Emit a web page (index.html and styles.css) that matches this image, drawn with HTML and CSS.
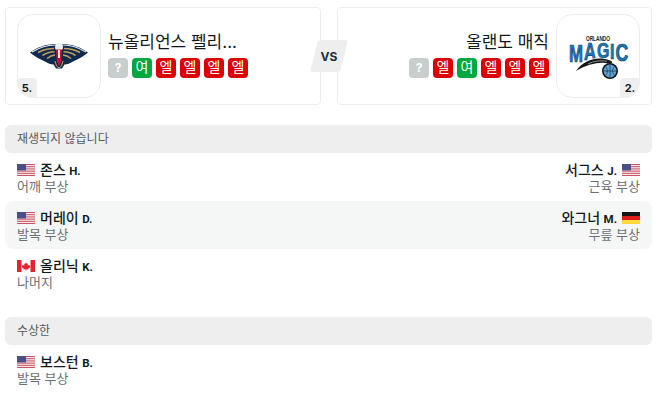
FILE: index.html
```html
<!DOCTYPE html>
<html lang="ko">
<head>
<meta charset="utf-8">
<title>뉴올리언스 펠리컨스 - 올랜도 매직</title>
<link rel="stylesheet" href="styles.css">
</head>
<body>
<svg class="defs" width="0" height="0" aria-hidden="true">
  <defs>
    <symbol id="flag-us" viewBox="0 0 18 12">
      <rect width="18" height="12" fill="#fff"/>
      <g fill="#c8475a">
        <rect y="0" width="18" height="0.92"/><rect y="1.85" width="18" height="0.92"/><rect y="3.69" width="18" height="0.92"/><rect y="5.54" width="18" height="0.92"/><rect y="7.38" width="18" height="0.92"/><rect y="9.23" width="18" height="0.92"/><rect y="11.08" width="18" height="0.92"/>
      </g>
      <rect width="9" height="6.46" fill="#4a4f85"/>
    </symbol>
    <symbol id="flag-de" viewBox="0 0 18 12">
      <rect width="18" height="4" fill="#161616"/>
      <rect y="4" width="18" height="4" fill="#dd1c1c"/>
      <rect y="8" width="18" height="4" fill="#ffd83a"/>
    </symbol>
    <symbol id="flag-ca" viewBox="0 0 18 12">
      <rect width="18" height="12" fill="#fff"/>
      <rect width="4.5" height="12" fill="#e8222c"/>
      <rect x="13.5" width="4.5" height="12" fill="#e8222c"/>
      <path d="M9 2.2l1 1.8.9-.5-.3 2.2 1.2-.9.4.8 1.1-.2-.4 1.3.5.3-2.2 1.7.2.8-2-.3v1.4h-.8V9.2l-2 .3.2-.8-2.2-1.7.5-.3-.4-1.3 1.1.2.4-.8 1.2.9-.3-2.2.9.5z" fill="#e8222c"/>
    </symbol>
  </defs>
</svg>

<main class="page">
  <section class="match">
    <article class="team">
      <div class="logo">
        <svg class="logo-art" viewBox="0 0 84 84" role="img" aria-label="뉴올리언스 펠리컨스 로고">
          <path d="M13 38.500C20 33.500 29 30 38 30L42 33L46 30C55 30 64 33.500 71 38.500C67 42 62 45 57 47C53 49.500 50 50.500 47.500 50.500L45 54.500H39L36.500 50.500C34 50.500 31 49.500 27 47C22 45 17 42 13 38.500Z" fill="#0f2a4e"/>
          <path d="M15 38C22 33.800 30 31 38 31M69 38C62 33.800 54 31 46 31" fill="none" stroke="#e4e7ea" stroke-width="1.100"/>
          <path d="M21 38.500C26 35.800 31 34.500 37 34.500M25.500 41.500C29 39 33 37.800 37.500 37.800M30 44.500C32.500 42.500 35 41.200 38 41M63 38.500C58 35.800 53 34.500 47 34.500M58.500 41.500C55 39 51 37.800 46.500 37.800M54 44.500C51.500 42.500 49 41.200 46 41" fill="none" stroke="#c09f5e" stroke-width="1.600"/>
          <circle cx="42" cy="33" r="4" fill="#ebedee"/>
          <path d="M39 35.500H45L44.300 47L42 52.500L39.700 47Z" fill="#c8102e"/>
          <path d="M41 36H43V44H41Z" fill="#efe9da"/>
          <path d="M38 47L39.500 52L42 54L44.500 52L46 47" fill="none" stroke="#c09f5e" stroke-width="1"/>
        </svg>
        <span class="rank rank-left">5.</span>
      </div>
      <div class="team-info">
        <h2 class="team-name">뉴올리언스 펠리...</h2>
        <div class="form">
          <span class="pill unknown">?</span><span class="pill win">여</span><span class="pill loss">엘</span><span class="pill loss">엘</span><span class="pill loss">엘</span><span class="pill loss">엘</span>
        </div>
      </div>
    </article>

    <div class="vs"><span class="vs-text">VS</span></div>

    <article class="team team-away">
      <div class="team-info">
        <h2 class="team-name">올랜도 매직</h2>
        <div class="form">
          <span class="pill unknown">?</span><span class="pill loss">엘</span><span class="pill win">여</span><span class="pill loss">엘</span><span class="pill loss">엘</span><span class="pill loss">엘</span>
        </div>
      </div>
      <div class="logo">
        <svg class="logo-art" viewBox="0 0 84 84" role="img" aria-label="올랜도 매직 로고">
          <text class="magic-top" transform="translate(30 27) scale(.68 1)">ORLANDO</text>
          <g class="magic-word">
            <text transform="translate(13 48) scale(1.05 1.48)">M</text>
            <text transform="translate(28 46) scale(1.05 1.48)">A</text>
            <text transform="translate(41 44) scale(1 1.35)">G</text>
            <text transform="translate(54 45) scale(1 1.39)">I</text>
            <text transform="translate(59.500 47) scale(1.1 1.48)">C</text>
          </g>
          <path d="M20 57C27 47 40 41.500 54 46.500C58 48 56 50 52 49.500C44 47.500 32 50 20 57Z" fill="#fff" stroke="#fff" stroke-width="1.500"/>
          <path d="M20 57C27 47 40 41.500 54 46.500C58 48 56 50 52 49.500C44 47.500 32 50 20 57Z" fill="#15181b"/>
          <path d="M32 50C38 47 44 46.200 51 47.300" fill="none" stroke="#aab1b6" stroke-width="0.800"/>
          <circle cx="54" cy="57" r="8" fill="#15181b"/>
          <circle cx="54" cy="57" r="6.400" fill="#5fa3d6"/>
          <path d="M47.600 57H60.400M54 50.600V63.400M49.500 52.500C52 55 52 59 49.500 61.500M58.500 52.500C56 55 56 59 58.500 61.500" fill="none" stroke="#16324a" stroke-width="0.700"/>
        </svg>
        <span class="rank rank-right">2.</span>
      </div>
    </article>
  </section>

  <section class="group">
    <h3 class="group-title">재생되지 않습니다</h3>
    <div class="row">
      <div class="player">
        <div class="player-name"><svg class="flag"><use href="#flag-us"/></svg><span>존스 <b class="initial">H.</b></span></div>
        <div class="player-note">어깨 부상</div>
      </div>
      <div class="player player-away">
        <div class="player-name"><span>서그스 <b class="initial">J.</b></span><svg class="flag"><use href="#flag-us"/></svg></div>
        <div class="player-note">근육 부상</div>
      </div>
    </div>
    <div class="row row-alt">
      <div class="player">
        <div class="player-name"><svg class="flag"><use href="#flag-us"/></svg><span>머레이 <b class="initial">D.</b></span></div>
        <div class="player-note">발목 부상</div>
      </div>
      <div class="player player-away">
        <div class="player-name"><span>와그너 <b class="initial">M.</b></span><svg class="flag"><use href="#flag-de"/></svg></div>
        <div class="player-note">무릎 부상</div>
      </div>
    </div>
    <div class="row">
      <div class="player">
        <div class="player-name"><svg class="flag"><use href="#flag-ca"/></svg><span>올리닉 <b class="initial">K.</b></span></div>
        <div class="player-note">나머지</div>
      </div>
    </div>
  </section>

  <section class="group">
    <h3 class="group-title">수상한</h3>
    <div class="row">
      <div class="player">
        <div class="player-name"><svg class="flag"><use href="#flag-us"/></svg><span>보스턴 <b class="initial">B.</b></span></div>
        <div class="player-note">발목 부상</div>
      </div>
    </div>
  </section>
</main>
</body>
</html>
```

FILE: styles.css
```css
* {
  box-sizing: border-box;
}

html,
body {
  margin: 0;
  padding: 0;
  background: #fff;
}

body {
  font-family: Inter, "Noto Sans CJK KR", sans-serif;
  color: #14191e;
  overflow: hidden;
}

.defs {
  display: block;
  height: 0;
}

.page {
  padding: 7px 4px 0 5px;
}

.match {
  position: relative;
  display: flex;
  justify-content: space-between;
}

.team {
  display: flex;
  align-items: center;
  gap: 7px;
  width: 316px;
  height: 98px;
  padding: 6px 11px;
  border: 1px solid #eceeee;
  border-radius: 4px;
}

.team-away {
  width: 315px;
  justify-content: flex-end;
}

.logo {
  position: relative;
  flex: none;
  width: 84px;
  height: 84px;
  border: 1px solid #eceeee;
  border-radius: 16px;
}

.logo-art {
  position: absolute;
  top: -1px;
  left: -1px;
  width: 84px;
  height: 84px;
}

.rank {
  position: absolute;
  bottom: -1px;
  width: 20px;
  height: 20px;
  background: #eeeeee;
  font-size: 11px;
  font-weight: 700;
  line-height: 20px;
  text-align: center;
}

.rank-left {
  left: -1px;
  border-radius: 4px 4px 0 16px;
}

.rank-right {
  right: -1px;
  border-radius: 4px 4px 16px 0;
}

.team-info {
  display: flex;
  flex-direction: column;
  min-width: 0;
}

.team-away .team-info {
  align-items: flex-end;
}

.team-name {
  margin: 0 0 4px;
  font-size: 17px;
  font-weight: 400;
  line-height: 24px;
  white-space: nowrap;
}

.form {
  display: flex;
  gap: 4px;
  margin-bottom: 4px;
}

.pill {
  width: 20px;
  height: 20px;
  border-radius: 4px;
  color: #fff;
  font-size: 14px;
  font-weight: 400;
  line-height: 18px;
  text-align: center;
}

.unknown {
  background: #c8cdcd;
  font-size: 12px;
  font-weight: 700;
  line-height: 20px;
}

.win {
  background: #00a83f;
}

.loss {
  background: #dc0000;
}

.vs {
  position: absolute;
  top: 33px;
  left: 305px;
  width: 38px;
  height: 32px;
  display: flex;
  align-items: center;
  justify-content: center;
}

.vs::before {
  content: "";
  position: absolute;
  inset: 0 4px;
  background: #eeeeee;
  border-radius: 3px;
  transform: skewX(-14deg);
}

.vs-text {
  position: relative;
  font-size: 12px;
  font-weight: 700;
  color: #1f2f3a;
}

.group {
  margin-top: 20px;
}

.group-title {
  margin: 0;
  height: 28px;
  padding-left: 12px;
  background: #eeeeee;
  border-radius: 6px;
  color: #555a5f;
  font-size: 12px;
  font-weight: 400;
  line-height: 27px;
}

.row {
  display: flex;
  justify-content: space-between;
  height: 48px;
  padding: 8px 12px 0;
  border-radius: 8px;
}

.row-alt {
  background: #f5f7f7;
}

.player-name {
  display: flex;
  align-items: center;
  gap: 5px;
  height: 16px;
  margin-top: 1px;
  font-family: Roboto, "Noto Sans CJK KR", sans-serif;
  font-size: 14px;
  font-weight: 500;
  line-height: 16px;
}

.player-away .player-name {
  justify-content: flex-end;
}

.player-note {
  font-size: 13px;
  line-height: 17px;
  color: #6b7075;
}

.player-away .player-note {
  text-align: right;
}

.initial {
  font-size: 11.5px;
  font-weight: 700;
}

.flag {
  flex: none;
  width: 18px;
  height: 12px;
}

.magic-top {
  font-family: "Liberation Sans", sans-serif;
  font-size: 7px;
  font-weight: 700;
  fill: #1a1a1a;
}

.magic-word {
  font-family: "Liberation Sans", sans-serif;
  font-size: 16px;
  font-weight: 700;
  fill: #1579c2;
  stroke: #1d3a52;
  stroke-width: 0.500;
}
```
